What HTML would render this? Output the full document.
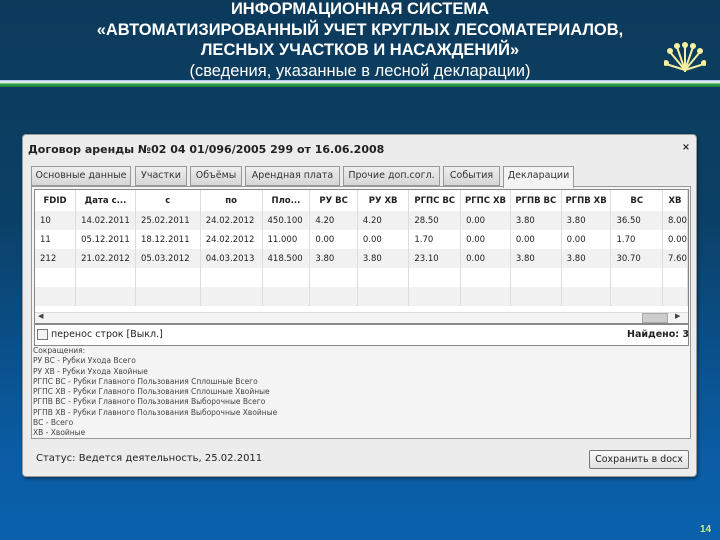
<!DOCTYPE html>
<html><head><meta charset="utf-8"><style>
*{margin:0;padding:0;box-sizing:border-box}
body{width:720px;height:540px;overflow:hidden;background:linear-gradient(#0c3a5b 0%,#0b4066 40%,#0a5da6 85%,#0a60ab 100%);font-family:"Liberation Sans","DejaVu Sans",sans-serif;position:relative}
.h{position:absolute;left:0;width:720px;text-align:center;color:#fff;font-weight:bold;font-size:16.5px;line-height:19px}
.line{position:absolute;left:0;top:80px;width:720px;height:7px;background:linear-gradient(#8fb8e0,#ffffff 30%,#2fa24f 60%,#1d7a3e)}
.win{position:absolute;left:22px;top:134px;width:675px;height:343px;background:#ececec;border:1px solid #999;border-radius:4px;box-shadow:1px 2px 3px rgba(0,0,0,.4)}
.t{position:absolute;font-family:"DejaVu Sans",sans-serif;font-size:9.5px;color:#222;white-space:nowrap}
.tab{position:absolute;top:31px;height:20px;border:1px solid #999;background:linear-gradient(#eee,#d6d6d6);font-family:"DejaVu Sans",sans-serif;font-size:9.5px;color:#333;text-align:center;line-height:18px}
.grid{position:absolute;left:11px;top:54px;width:655px;height:135px;background:#fff;border:1px solid #888;overflow:hidden}
table{border-collapse:collapse;font-family:"DejaVu Sans",sans-serif;font-size:8.5px;color:#222}
td{height:19px;border-right:1px solid #ddd;padding-left:5px;white-space:nowrap}
tr.hd td{font-weight:bold;height:21px;text-align:center;padding:0}
tr.g td{background:#f1f1f1}
</style></head><body>
<div class="h" style="top:0">ИНФОРМАЦИОННАЯ СИСТЕМА</div>
<div class="h" style="top:21px">«АВТОМАТИЗИРОВАННЫЙ УЧЕТ КРУГЛЫХ ЛЕСОМАТЕРИАЛОВ,</div>
<div class="h" style="top:41px">ЛЕСНЫХ УЧАСТКОВ И НАСАЖДЕНИЙ»</div>
<div class="h" style="top:62px;font-weight:normal">(сведения, указанные в лесной декларации)</div>
<div class="line"></div>
<svg style="position:absolute;left:664px;top:40px" width="42" height="34" viewBox="0 0 42 34"><g stroke="#f6f0a0" stroke-width="2" fill="#f6f0a0">
<line x1="21" y1="32" x2="21" y2="6"/><line x1="21" y1="30" x2="6" y2="12"/><line x1="21" y1="30" x2="36" y2="12"/><line x1="21" y1="30" x2="2" y2="24"/><line x1="21" y1="30" x2="40" y2="24"/><line x1="21" y1="30" x2="13" y2="7"/><line x1="21" y1="30" x2="29" y2="7"/>
<circle cx="21" cy="5" r="2"/><circle cx="6" cy="11" r="2"/><circle cx="36" cy="11" r="2"/><circle cx="2" cy="23" r="2"/><circle cx="40" cy="23" r="2"/><circle cx="13" cy="6" r="2"/><circle cx="29" cy="6" r="2"/></g></svg>
<div class="win">
<div class="t" style="left:5px;top:8px;font-size:11px;font-weight:bold;color:#222">Договор аренды №02 04 01/096/2005 299 от 16.06.2008</div>
<div class="t" style="left:659px;top:7px;font-weight:bold">×</div>
<div style="position:absolute;left:8px;top:51px;width:660px;height:253px;border:1px solid #999;background:#f4f4f4"></div>
<div class="tab" style="left:8px;width:100px">Основные данные</div>
<div class="tab" style="left:112px;width:52px">Участки</div>
<div class="tab" style="left:167px;width:52px">Объёмы</div>
<div class="tab" style="left:222px;width:95px">Арендная плата</div>
<div class="tab" style="left:320px;width:97px">Прочие доп.согл.</div>
<div class="tab" style="left:420px;width:57px">События</div>
<div class="tab" style="left:480px;width:71px;background:#f4f4f4;border-bottom:none;height:22px;top:31px">Декларации</div>
<div class="grid">
<table>
<colgroup><col style="width:41px"><col style="width:60px"><col style="width:65px"><col style="width:62px"><col style="width:48px"><col style="width:48px"><col style="width:52px"><col style="width:52px"><col style="width:50px"><col style="width:51px"><col style="width:50px"><col style="width:52px"><col style="width:23px"></colgroup>
<tr class="hd"><td>FDID</td><td>Дата с...</td><td>с</td><td>по</td><td>Пло...</td><td>РУ ВС</td><td>РУ ХВ</td><td>РГПС ВС</td><td>РГПС ХВ</td><td>РГПВ ВС</td><td>РГПВ ХВ</td><td>ВС</td><td>ХВ</td></tr>
<tr class="g"><td>10</td><td>14.02.2011</td><td>25.02.2011</td><td>24.02.2012</td><td>450.100</td><td>4.20</td><td>4.20</td><td>28.50</td><td>0.00</td><td>3.80</td><td>3.80</td><td>36.50</td><td>8.00</td></tr>
<tr><td>11</td><td>05.12.2011</td><td>18.12.2011</td><td>24.02.2012</td><td>11.000</td><td>0.00</td><td>0.00</td><td>1.70</td><td>0.00</td><td>0.00</td><td>0.00</td><td>1.70</td><td>0.00</td></tr>
<tr class="g"><td>212</td><td>21.02.2012</td><td>05.03.2012</td><td>04.03.2013</td><td>418.500</td><td>3.80</td><td>3.80</td><td>23.10</td><td>0.00</td><td>3.80</td><td>3.80</td><td>30.70</td><td>7.60</td></tr>
<tr><td></td><td></td><td></td><td></td><td></td><td></td><td></td><td></td><td></td><td></td><td></td><td></td><td></td></tr>
<tr class="g"><td></td><td></td><td></td><td></td><td></td><td></td><td></td><td></td><td></td><td></td><td></td><td></td><td></td></tr>
</table>
<div style="position:absolute;left:0;bottom:0;width:653px;height:11px;background:#f4f4f4;border-top:1px solid #ddd"><span style="position:absolute;left:3px;top:-1px;font-size:7px;color:#444">◀</span><div style="position:absolute;left:607px;top:0;width:26px;height:10px;background:#ccc;border:1px solid #aaa"></div><span style="position:absolute;left:640px;top:-1px;font-size:7px;color:#444">▶</span></div>
</div>
<div style="position:absolute;left:11px;top:189px;width:655px;height:22px;background:#fff;border:1px solid #888"></div>
<div style="position:absolute;left:14px;top:194px;width:11px;height:11px;border:1px solid #777;background:#f4f4f4"></div>
<div class="t" style="left:28px;top:194px">перенос строк [Выкл.]</div>
<div class="t" style="left:604px;top:194px;font-weight:bold">Найдено: 3</div>
<div class="t" style="left:10px;top:211px;font-size:7.5px;line-height:10.3px;color:#444">Сокращения:<br>РУ ВС - Рубки Ухода Всего<br>РУ ХВ - Рубки Ухода Хвойные<br>РГПС ВС - Рубки Главного Пользования Сплошные Всего<br>РГПС ХВ - Рубки Главного Пользования Сплошные Хвойные<br>РГПВ ВС - Рубки Главного Пользования Выборочные Всего<br>РГПВ ХВ - Рубки Главного Пользования Выборочные Хвойные<br>ВС - Всего<br>ХВ - Хвойные</div>
<div class="t" style="left:13px;top:318px;font-size:10px">Статус: Ведется деятельность, 25.02.2011</div>
<div style="position:absolute;left:566px;top:315px;width:100px;height:19px;border:1px solid #777;border-radius:2px;background:linear-gradient(#fafafa,#e0e0e0);font-family:'DejaVu Sans',sans-serif;font-size:9.5px;text-align:center;line-height:17px;color:#222">Сохранить в docx</div>
</div>
<div style="position:absolute;left:700px;top:524px;color:#c8f06a;font-weight:bold;font-size:10px">14</div>
</body></html>
